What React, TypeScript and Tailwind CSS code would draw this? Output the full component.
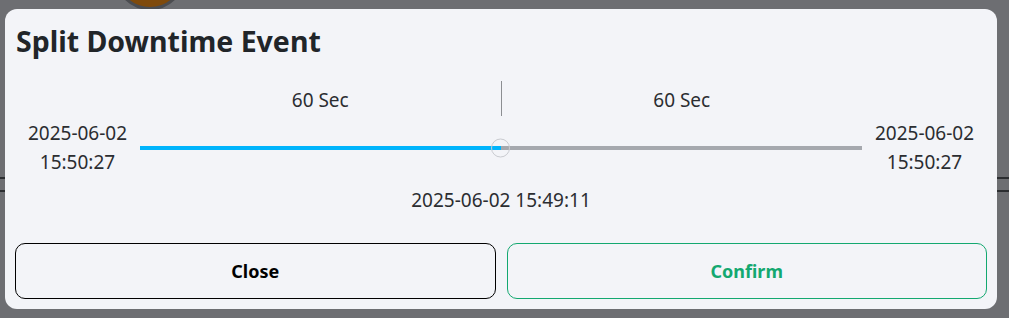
export default function App() {
  return (
    <div className="relative w-[1009px] h-[318px] overflow-hidden bg-[#6d6e72] font-['Noto_Sans',sans-serif]">
      {/* Background page bits behind the dialog */}
      <div className="absolute left-[114px] top-[-62px] w-[72px] h-[72px] rounded-full bg-[#7f4a0c] border-[3px] border-[#4b4c50]" />
      <div className="absolute left-0 right-0 top-[177px] h-[2px] bg-[#2c2e31]" />
      <div className="absolute left-0 right-0 top-[190px] h-[2px] bg-[#2c2e31]" />

      {/* Dialog */}
      <div className="absolute left-[5px] top-[9px] w-[992px] h-[300px] rounded-[12px] bg-[#f3f4f8] px-[10px] pb-[10px] flex flex-col">
        <h2 className="pt-[14px] pl-[1px] text-[28.5px] leading-[36px] font-bold text-[#212529]">
          Split Downtime Event
        </h2>

        <div className="mt-[20px] grid grid-cols-[125px_722px_125px] text-[19px] text-[#2b2d31]">
          <div />
          <div className="flex items-center h-[38px]">
            <div className="flex-1 text-center pt-[4px]">60 Sec</div>
            <div className="w-px h-[35px] bg-[#8c8e92]" />
            <div className="flex-1 text-center pt-[4px]">60 Sec</div>
          </div>
          <div />

          <div className="flex flex-col items-center leading-[29px] mt-[2px]">
            <span>2025-06-02</span>
            <span>15:50:27</span>
          </div>
          <div className="relative flex items-center mt-[2px]">
            <div className="flex-1 h-[4px] bg-[#00b4fc]" />
            <div className="flex-1 h-[4px] bg-[#a5a8ae]" />
            <div className="absolute left-[351px] top-1/2 -translate-y-1/2 w-[19px] h-[19px] rounded-full border border-[#c9cbd0]" />
          </div>
          <div className="flex flex-col items-center leading-[29px] mt-[2px]">
            <span>2025-06-02</span>
            <span>15:50:27</span>
          </div>

          <div />
          <div className="text-center mt-[10px] leading-[26px]">2025-06-02 15:49:11</div>
          <div />
        </div>

        <div className="mt-auto flex gap-[11px]">
          <button className="flex-1 h-[56px] rounded-[10px] border border-black text-[18px] font-bold text-black">
            Close
          </button>
          <button className="flex-1 h-[56px] rounded-[10px] border border-[#13a870] text-[18px] font-bold text-[#13a870]">
            Confirm
          </button>
        </div>
      </div>
    </div>
  )
}
